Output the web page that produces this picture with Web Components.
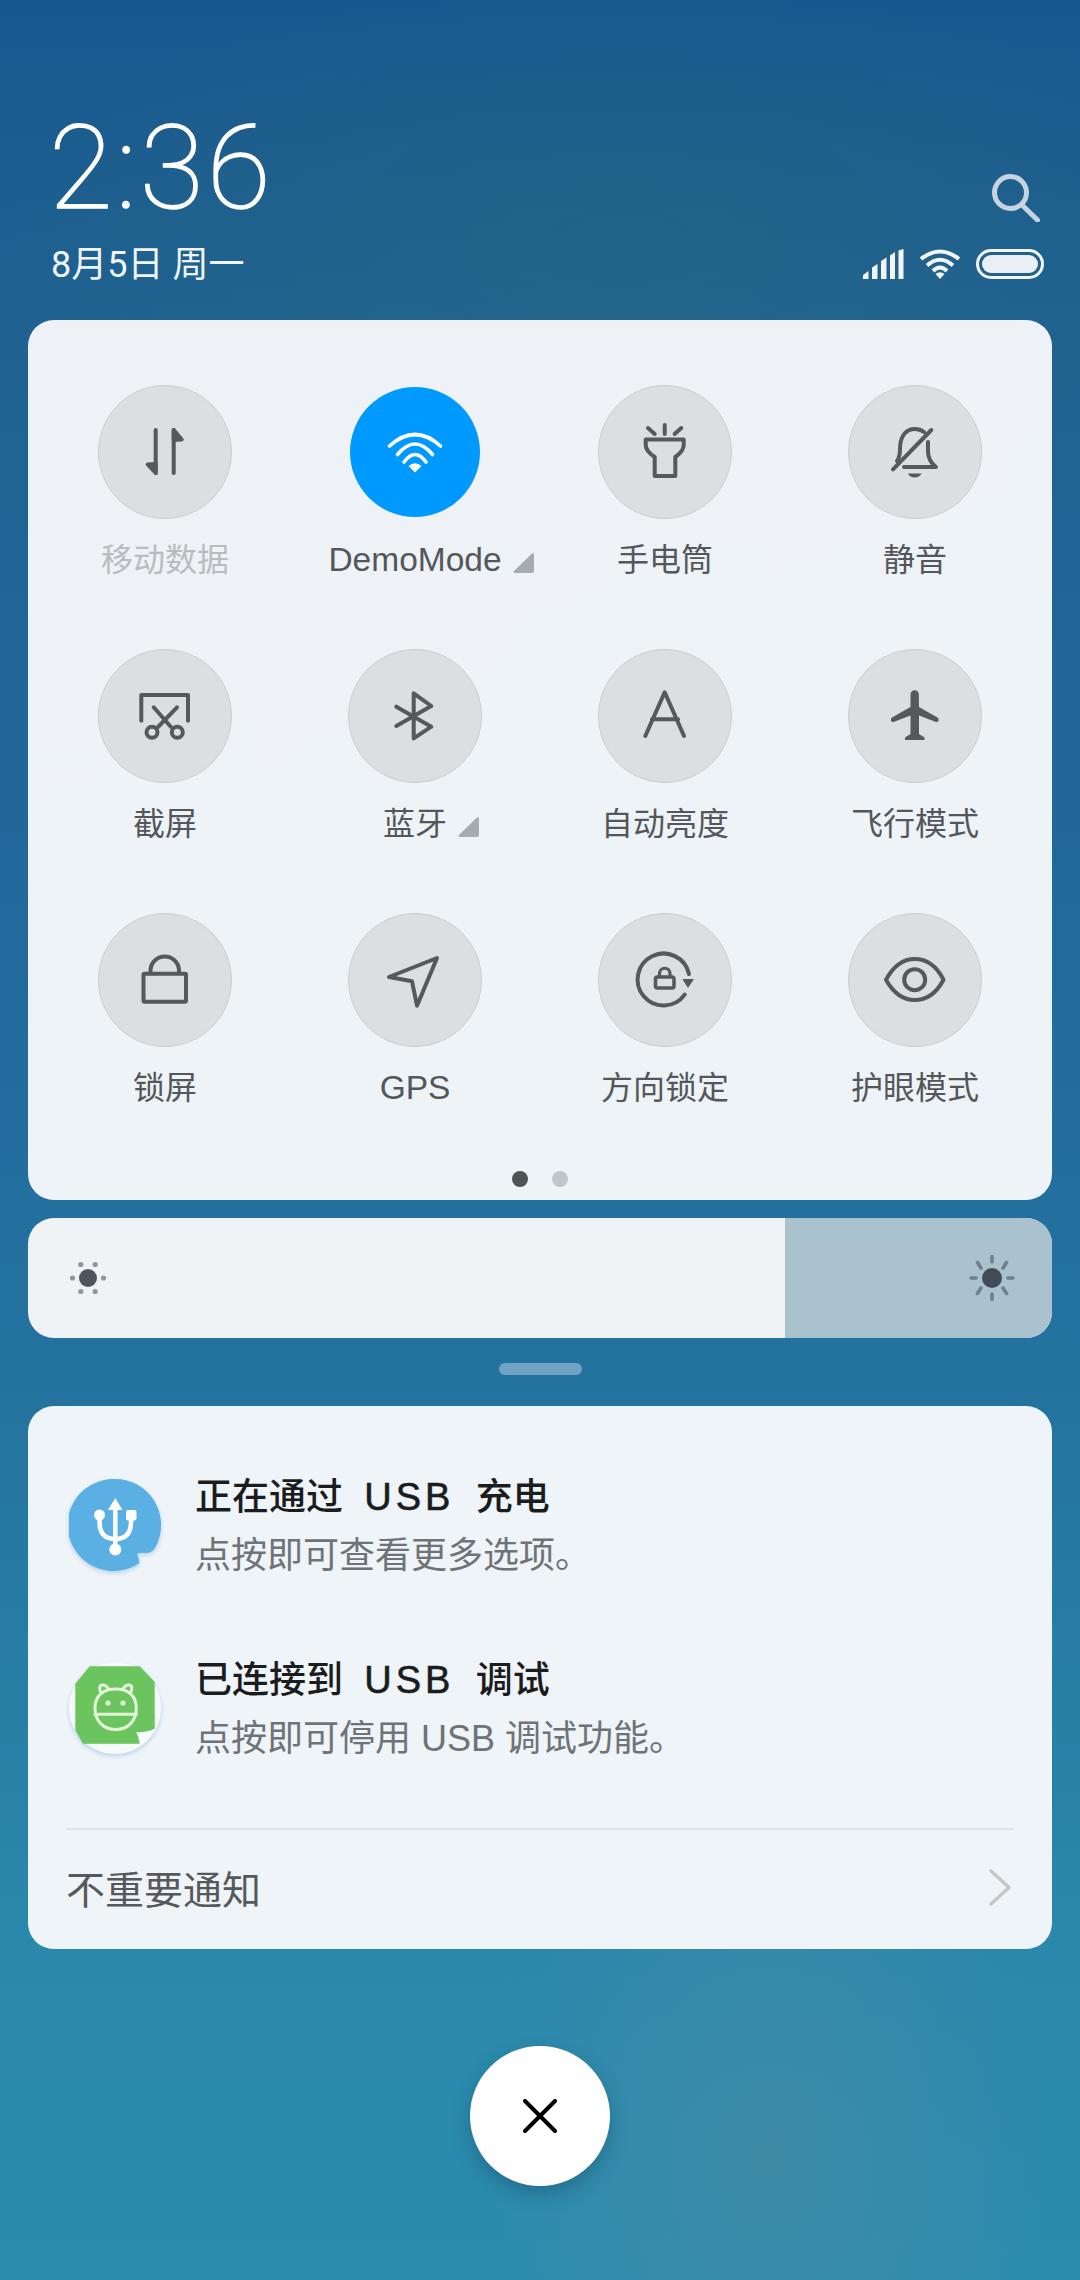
<!DOCTYPE html>
<html lang="zh-CN">
<head>
<meta charset="utf-8">
<title>MIUI shade</title>
<style>
  html, body { margin: 0; padding: 0; }
  body {
    width: 1080px;
    height: 2280px;
    overflow: hidden;
    font-family: "Liberation Sans", "Noto Sans CJK SC", sans-serif;
    background:
      radial-gradient(ellipse 280px 400px at 770px 2160px, rgba(90,140,160,.42), rgba(90,140,160,0) 100%),
      radial-gradient(ellipse 620px 260px at 620px 240px, rgba(40,105,125,.45), rgba(40,105,125,0) 100%),
      linear-gradient(180deg, #19588f 0%, #1f6291 14%, #226b9d 45%, #24749f 62%, #2a88ac 85%, #2b8cae 100%);
  }
</style>
</head>
<body>
<miui-shade>
  <status-head></status-head>
  <qs-panel>
    <qs-tile label="移动数据" icon="data" dim></qs-tile>
    <qs-tile label="DemoMode" icon="wifi" active more></qs-tile>
    <qs-tile label="手电筒" icon="torch"></qs-tile>
    <qs-tile label="静音" icon="mute"></qs-tile>
    <qs-tile label="截屏" icon="shot"></qs-tile>
    <qs-tile label="蓝牙" icon="bt" more></qs-tile>
    <qs-tile label="自动亮度" icon="auto"></qs-tile>
    <qs-tile label="飞行模式" icon="plane"></qs-tile>
    <qs-tile label="锁屏" icon="lock"></qs-tile>
    <qs-tile label="GPS" icon="gps"></qs-tile>
    <qs-tile label="方向锁定" icon="rotate"></qs-tile>
    <qs-tile label="护眼模式" icon="eye"></qs-tile>
  </qs-panel>
  <bright-bar></bright-bar>
  <notif-card>
    <notif-row title="正在通过 USB 充电" sub="点按即可查看更多选项。" icon="usb"></notif-row>
    <notif-row title="已连接到 USB 调试" sub="点按即可停用 USB 调试功能。" icon="adb"></notif-row>
  </notif-card>
  <close-btn></close-btn>
</miui-shade>

<script>
const ICONS = {
  data: `<path d="M57.7 45v43"/><path d="M75.7 88V45"/><path d="M57.7 88l-8-8.500 8-.500z" fill="currentColor"/><path d="M75.700 45l8 9.500-8 .500z" fill="currentColor"/>`,
  wifi: `<g stroke-width="3.600"><path d="M39.500 59Q65 36 90.500 59"/><path d="M47.500 67.500Q65 46.500 82.500 67.500"/><path d="M54 75Q65 60 76 75"/></g><path d="M58.500 79Q65 73.500 71.500 79L65 85.500z" fill="currentColor" stroke="none"/>`,
  torch: `<path d="M66.700 40v9M50 43l6.700 6M83.300 43l-6.700 6"/><path d="M47.700 54.500H85.700V60Q85.700 66 77.300 72V91H56.700V72Q47.700 66 47.700 60z"/>`,
  mute: `<path d="M49 76Q52 72 52 64C52 51 58 44 67 44Q72 44 76 47"/><path d="M80 57V66Q80 76 88 82H56"/><path d="M45 84.300L83.300 45"/><path d="M60 88.500H73.500Q71.500 92.500 66.700 92.500T60 88.500z" fill="currentColor" stroke="none"/>`,
  shot: `<path d="M43.300 71.700V46H90V71.700"/><path d="M55.700 58.300L73 78M79 58.300L60 78"/><circle cx="54" cy="83.300" r="5.500"/><circle cx="79.300" cy="83.300" r="5.500"/>`,
  bt: `<path d="M48.300 57.700L83.300 77.700 65.700 89.300V44.300L83.300 57 48.300 77"/>`,
  auto: `<path d="M47.300 87L66.700 43.300 86 87"/><path d="M54 70.300H80"/>`,
  plane: `<path d="M62.500 45.500a4.200 4.200 0 0 1 8.400 0V58L89.500 68.500Q91 69.500 90.500 71.500T88 73L71 66.500V85L76.500 88.500V91H57V88.500L62.500 85V66.500L45.500 73Q43.500 73.500 43 71.500T44 68.500L62.500 58z" fill="currentColor" stroke="none"/>`,
  lock: `<rect x="45.500" y="60.700" width="42.500" height="28" rx="1"/><path d="M52.500 60V56.500A14.300 14.300 0 0 1 81 56.500V60"/>`,
  gps: `<path d="M89 45L41 64 64 68.300 69 92.700z"/>`,
  rotate: `<path d="M86.700 81.700A26 26 0 1 1 91 61"/><path d="M84.300 66H96L90 75z" fill="currentColor" stroke="none"/><rect x="57.500" y="64" width="18.500" height="11" rx="2" stroke-width="3.600"/><path d="M61.500 63V60.500A5.200 5.200 0 0 1 72 60.500V63" stroke-width="3.200"/>`,
  eye: `<path d="M38 66.700C46 52 56 46 66.700 46C78 46 88 52 95.500 66.700C88 81 78 87 66.700 87C56 87 46 81 38 66.700z"/><circle cx="66.700" cy="66.700" r="10.500"/>`,
};

const NOTIF_ICONS = {
  usb: `<path d="M46 0A46 46 0 0 1 87 67Q84 74 77 74Q70 73 68 75Q70 80 70.500 84A46 46 0 1 1 46 0z" fill="#5ab0e2"/>
    <g fill="none" stroke="#fff" stroke-width="4.500">
      <path d="M46.300 24V70"/><path d="M30.500 36V43Q30.500 60 46.300 60Q62 60 62 43V36"/>
    </g>
    <path d="M46.300 19L53.500 31H39z" fill="#fff"/>
    <circle cx="30.500" cy="36" r="5.500" fill="#fff"/>
    <rect x="57" y="31" width="10.500" height="10.500" rx="2" fill="#fff"/>
    <circle cx="46.300" cy="70.500" r="6" fill="#fff"/>`,
  adb: `<circle cx="46" cy="46" r="46" fill="#f7fafb"/>
    <path d="M20.700 4.300H70.700L85.700 20V66.700Q76 71 67.300 70Q70 76 70.700 81.700H14L6.300 68.300V21.700z" fill="#6cc45f"/>
    <g fill="none" stroke="#e4f6d8" stroke-width="3" stroke-linecap="round">
      <path d="M26 46C26 33 35 27 46.700 27S67.300 33 67.300 46C67.300 59 59 67.500 46.700 67.500S26 59 26 46z"/>
      <path d="M26 52.300H67.300"/>
      <path d="M32 31Q29 24 33 23Q37 22.500 40 27.500M61.500 31Q64.500 24 60.500 23Q56.500 22.500 53.500 27.500"/>
    </g>
    <circle cx="39" cy="41" r="2.600" fill="#e4f6d8"/><circle cx="54" cy="41" r="2.600" fill="#e4f6d8"/>`,
};

class MiuiShade extends HTMLElement {
  constructor() {
    super();
    this.attachShadow({ mode: "open" }).innerHTML = `
      <style>
        :host { display: flex; flex-direction: column; width: 1080px; height: 2280px; box-sizing: border-box; padding: 0 28px; }
      </style>
      <slot></slot>`;
  }
}

class StatusHead extends HTMLElement {
  constructor() {
    super();
    this.attachShadow({ mode: "open" }).innerHTML = `
      <style>
        :host { display: flex; justify-content: space-between; height: 320px; box-sizing: border-box; padding: 101px 8px 0 23px; color: #fff; }
        .time { font: 100 116px/134px Roboto, sans-serif; letter-spacing: 3.500px; margin: 0 0 0 -2px; -webkit-text-stroke: 1.600px #fff; }
        .date { font: 400 36px/46px Roboto, "Noto Sans CJK SC", sans-serif; margin-top: 7px; color: #f0f4f7; }
        .side { display: flex; flex-direction: column; align-items: flex-end; padding-top: 73px; }
        .search { width: 48px; height: 48px; margin-right: 4px; }
        .row { display: flex; align-items: center; gap: 15px; margin-top: 27px; }
        svg { display: block; }
      </style>
      <div>
        <div class="time">2:36</div>
        <div class="date">8月5日 周一</div>
      </div>
      <div class="side">
        <svg class="search" viewBox="0 0 48 48" fill="none" stroke="#c7d3de" stroke-width="5" stroke-linecap="round">
          <circle cx="18.500" cy="18.500" r="16"/><path d="M29.500 30.500L45.500 46"/>
        </svg>
        <div class="row">
          <svg width="41" height="30" viewBox="0 0 41 30" fill="#f1f5f8">
            <path d="M0 30V26L5.500 22V30zM9 30V18.500L14.500 15V30zM18 30V12L23.500 8.500V30zM27 30V6.500L32 3V30z"/>
            <path d="M35.500 30V1.500L40.500 0V30z"/>
          </svg>
          <svg width="42" height="30" viewBox="0 0 42 30" fill="none" stroke="#f1f5f8" stroke-width="4">
            <path d="M2 10Q21 -5 40 10"/><path d="M8 16.500Q21 5 34 16.500"/><path d="M14 22Q21 15 28 22"/>
            <path d="M16.500 25Q21 21.500 25.500 25L21 30z" fill="#f1f5f8" stroke="none"/>
          </svg>
          <svg width="68" height="30" viewBox="0 0 68 30">
            <rect x="1.500" y="1.500" width="65" height="27" rx="13.500" fill="none" stroke="#f1f5f8" stroke-width="3"/>
            <rect x="6" y="6" width="56" height="18" rx="9" fill="#e9eff5"/>
          </svg>
        </div>
      </div>`;
  }
}

class QsPanel extends HTMLElement {
  constructor() {
    super();
    this.attachShadow({ mode: "open" }).innerHTML = `
      <style>
        :host { display: block; box-sizing: border-box; height: 880px; padding: 65px 12px 12px; border-radius: 26px;
          background: linear-gradient(160deg, #eef2f6, #eef3f8 60%, #edf3f7); }
        .grid { display: grid; grid-template-columns: repeat(4, 250px); row-gap: 66px; }
        .dots { display: flex; justify-content: center; gap: 24px; margin: 60px 0 0 0; }
        .dots i { width: 16px; height: 16px; border-radius: 50%; background: #c0c5c9; }
        .dots i:first-child { background: #4e5356; }
      </style>
      <div class="grid"><slot></slot></div>
      <div class="dots"><i></i><i></i></div>`;
  }
}

class QsTile extends HTMLElement {
  constructor() {
    super();
    this._root = this.attachShadow({ mode: "open" });
  }

  connectedCallback() {
    const label = this.getAttribute("label"),
      icon = ICONS[this.getAttribute("icon")],
      size = this.hasAttribute("active") ? 130 : 134,
      latin = /^[A-Za-z]+$/.test(label);

    this._root.innerHTML = `
      <style>
        :host { display: flex; flex-direction: column; align-items: center; height: 198px; }
        .wrap { width: 134px; height: 134px; display: flex; align-items: center; justify-content: center; }
        .disc { box-sizing: border-box; width: ${size}px; height: ${size}px; border-radius: 50%;
          background: #dcdfe2; border: 1.500px solid #cbced1; color: #55585c; }
        :host([active]) .disc { background: #0099ff; border: 0; color: #fff; }
        svg { display: block; margin: ${this.hasAttribute("active") ? 0 : -1.5}px; }
        .label { position: relative; margin-top: 19px; font-size: ${latin ? 33.5 : 32}px; line-height: 44px; color: #53575b; white-space: nowrap; }
        :host([dim]) .label { color: #b8bcc0; }
        .more { position: absolute; left: calc(100% + 11px); bottom: 9px; width: 21px; height: 21px; margin: 0; }
      </style>
      <div class="wrap">
        <div class="disc">
          <svg width="${size}" height="${size}" viewBox="0 0 ${size} ${size}" fill="none" stroke="currentColor" stroke-width="4" stroke-linecap="round" stroke-linejoin="round">${icon}</svg>
        </div>
      </div>
      <div class="label">${label}${this.hasAttribute("more") ? `<svg class="more" viewBox="0 0 21 21"><path d="M19 1.500Q21 0 21 3V19Q21 21 19 21H2Q-.5 21 1 19z" fill="#a6abb1"/></svg>` : ""}</div>`;
  }
}

class BrightBar extends HTMLElement {
  constructor() {
    super();
    this.attachShadow({ mode: "open" }).innerHTML = `
      <style>
        :host { display: flex; flex-direction: column; align-items: center; margin-top: 18px; }
        .bar { display: flex; width: 100%; height: 120px; border-radius: 26px; overflow: hidden; background: #eff3f6; }
        .low { flex: 1; display: flex; align-items: center; padding-left: 40px; }
        .high { width: 267px; display: flex; align-items: center; justify-content: flex-end; padding-right: 36px; box-sizing: border-box; background: #aac1ce; }
        .grip { width: 83px; height: 12px; border-radius: 6px; margin-top: 25px; background: #72a3c3; }
        svg { display: block; }
      </style>
      <div class="bar">
        <div class="low">
          <svg width="40" height="40" viewBox="-20 -20 40 40" fill="#8f979b">
            <circle cx="-7.200" cy="-13.500" r="2.600"/><circle cx="7.200" cy="-13.500" r="2.600"/>
            <circle cx="-15.500" cy="0" r="2.600"/><circle cx="15.500" cy="0" r="2.600"/>
            <circle cx="-7.200" cy="13.500" r="2.600"/><circle cx="7.200" cy="13.500" r="2.600"/>
            <circle r="9" fill="#4f565b"/>
          </svg>
        </div>
        <div class="high">
          <svg width="48" height="48" viewBox="-24 -24 48 48" fill="none" stroke="#6f808e" stroke-width="3.600" stroke-linecap="round">
            <path d="M0-21.500V-16M0 16V21.500M-21 0H-16M16 0H21M-14.500-15.500L-11-10M14.500-15.500L11-10M-14.500 15.500L-11 10M14.500 15.500L11 10"/>
            <circle r="10" fill="#414c58" stroke="none"/>
          </svg>
        </div>
      </div>
      <div class="grip"></div>`;
  }
}

class NotifCard extends HTMLElement {
  constructor() {
    super();
    this.attachShadow({ mode: "open" }).innerHTML = `
      <style>
        :host { display: block; box-sizing: border-box; height: 543px; margin-top: 31px; padding: 27px 38px 0; border-radius: 26px; background: #eff4f8; }
        .sep { height: 2px; margin-top: 29px; background: #e1e5e8; }
        .foot { display: flex; align-items: center; justify-content: space-between; box-sizing: border-box; height: 119px; padding: 0 3px 5px 0;
          font-size: 39px; color: #55595c; }
        svg { display: block; }
      </style>
      <slot></slot>
      <div class="sep"></div>
      <div class="foot">
        <span>不重要通知</span>
        <svg width="22" height="37" viewBox="0 0 22 37" fill="none" stroke="#c4c8cb" stroke-width="3.500" stroke-linecap="round" stroke-linejoin="round"><path d="M2 2L20 18.500 2 35"/></svg>
      </div>`;
  }
}

class NotifRow extends HTMLElement {
  constructor() {
    super();
    this._root = this.attachShadow({ mode: "open" });
  }

  connectedCallback() {
    const title = this.getAttribute("title").replace("USB", "<b>USB</b>"),
      sub = this.getAttribute("sub"),
      icon = NOTIF_ICONS[this.getAttribute("icon")];

    this._root.innerHTML = `
      <style>
        :host { display: flex; align-items: center; height: 183px; }
        svg { display: block; flex: none; margin: 0 34px 0 3px; filter: drop-shadow(0 2px 2px rgba(70,150,200,.35)); }
        .text { padding-top: 12px; }
        .title { font-size: 37px; line-height: 50px; color: #1b1c1d; font-weight: 500; word-spacing: 11px; margin-top: -8px; white-space: nowrap; }
        .title b { font-weight: 400; font-size: 38px; letter-spacing: 4px; -webkit-text-stroke: .6px #1b1c1d; }
        .sub { font-size: 36px; line-height: 50px; color: #6d7376; margin-top: 8px; white-space: nowrap; }
      </style>
      <svg width="92" height="92" viewBox="0 0 92 92">${icon}</svg>
      <div class="text">
        <div class="title">${title}</div>
        <div class="sub">${sub}</div>
      </div>`;
  }
}

class CloseBtn extends HTMLElement {
  constructor() {
    super();
    this.attachShadow({ mode: "open" }).innerHTML = `
      <style>
        :host { display: flex; align-items: center; justify-content: center; align-self: center; width: 140px; height: 140px;
          margin-top: 97px; border-radius: 50%; background: #fff; box-shadow: 0 8px 18px rgba(20,70,100,.4); }
        svg { display: block; }
      </style>
      <svg width="34" height="34" viewBox="0 0 34 34" stroke="#000" stroke-width="4" stroke-linecap="round"><path d="M2 2L32 32M32 2L2 32"/></svg>`;
  }
}

customElements.define("miui-shade", MiuiShade);
customElements.define("status-head", StatusHead);
customElements.define("qs-panel", QsPanel);
customElements.define("qs-tile", QsTile);
customElements.define("bright-bar", BrightBar);
customElements.define("notif-card", NotifCard);
customElements.define("notif-row", NotifRow);
customElements.define("close-btn", CloseBtn);
</script>
</body>
</html>
